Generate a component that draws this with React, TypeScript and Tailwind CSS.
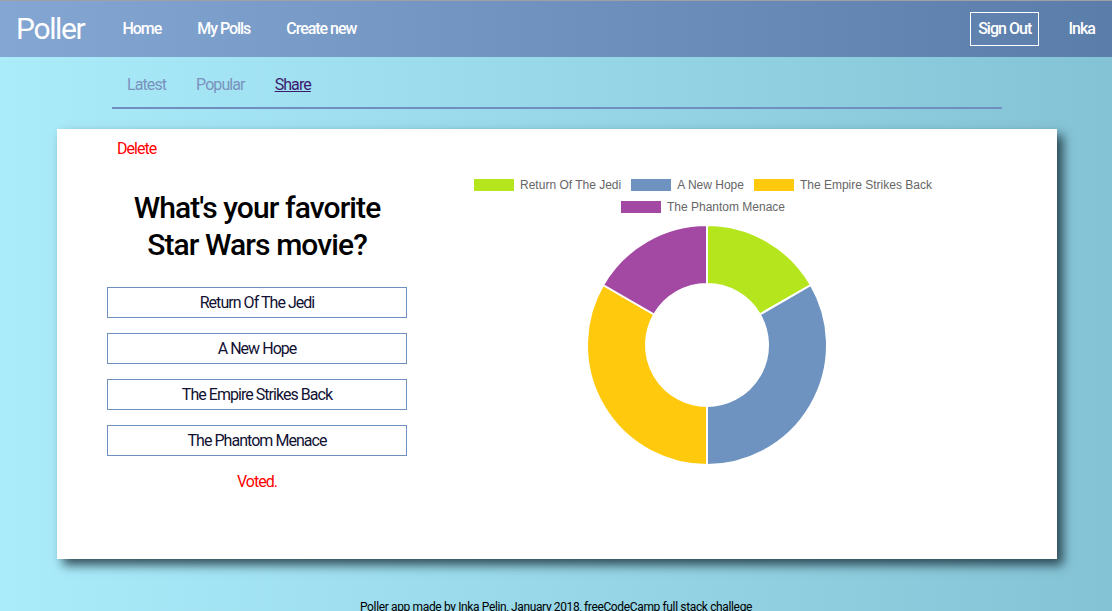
import React from "react";

const slices = [
  { label: "Return Of The Jedi", value: 1, color: "#b5e61d" },
  { label: "A New Hope", value: 2, color: "#6f93c0" },
  { label: "The Empire Strikes Back", value: 2, color: "#ffc90e" },
  { label: "The Phantom Menace", value: 1, color: "#a349a4" },
];

function arcPath(cx: number, cy: number, r: number, ri: number, a0: number, a1: number) {
  const p = (rad: number, a: number) => [cx + rad * Math.sin(a), cy - rad * Math.cos(a)];
  const [x0, y0] = p(r, a0);
  const [x1, y1] = p(r, a1);
  const [x2, y2] = p(ri, a1);
  const [x3, y3] = p(ri, a0);
  const large = a1 - a0 > Math.PI ? 1 : 0;
  return `M${x0} ${y0} A${r} ${r} 0 ${large} 1 ${x1} ${y1} L${x2} ${y2} A${ri} ${ri} 0 ${large} 0 ${x3} ${y3} Z`;
}

function Donut() {
  const total = slices.reduce((s, x) => s + x.value, 0);
  let acc = 0;
  return (
    <svg width="246" height="246" viewBox="0 0 246 246">
      {slices.map((s) => {
        const a0 = (acc / total) * Math.PI * 2;
        acc += s.value;
        const a1 = (acc / total) * Math.PI * 2;
        return (
          <path key={s.label} d={arcPath(123, 123, 120, 61, a0, a1)} fill={s.color} stroke="#fff" strokeWidth="2" />
        );
      })}
    </svg>
  );
}

export default function App() {
  return (
    <div
      className="w-[1112px] h-[611px] overflow-hidden bg-gradient-to-r from-[#abecfb] to-[#84c3d5] border-t border-[#a0a0a0]"
      style={{ fontFamily: "Roboto, 'Open Sans', sans-serif" }}
    >
      <header className="h-[56px] flex items-center bg-gradient-to-r from-[#84a6d3] to-[#5b7da9] text-white">
        <div className="pl-4 text-[30px] tracking-[-0.045em] leading-none">Poller</div>
        <nav className="flex items-center gap-[36px] ml-[38px] text-[16px] tracking-[-0.065em] font-medium">
          <span>Home</span>
          <span>My Polls</span>
          <span>Create new</span>
        </nav>
        <div className="ml-auto flex items-center">
          <span className="h-[34px] flex items-center border border-white px-[7px] text-[16px] tracking-[-0.06em] font-medium">Sign Out</span>
          <span className="ml-[29px] mr-[17px] text-[16px] tracking-[-0.06em] font-medium">Inka</span>
        </div>
      </header>

      <div className="mx-[112px] w-[890px] border-b-2 border-[#6f8fc0] flex gap-[30px] pl-[15px] pt-[16px] pb-[10px] text-[16px] tracking-[-0.057em]">
        <span className="text-[#7a93bd]">Latest</span>
        <span className="text-[#7a93bd]">Popular</span>
        <span className="text-[#3b1a6e] underline">Share</span>
      </div>

      <main className="mt-[20px] ml-[57px] w-[1000px] h-[430px] bg-white shadow-[6px_6px_10px_rgba(20,40,50,0.8)] flex">
        <section className="w-[400px] flex flex-col items-center">
          <div className="self-start ml-[60px] mt-[8px] text-[16px] text-[#ff0000] tracking-[-0.06em]">Delete</div>
          <h1 className="mt-[28px] text-[30px] font-medium leading-[37px] text-center text-black tracking-[-0.03em]">
            What's your favorite
            <br />
            Star Wars movie?
          </h1>
          <div className="mt-[24px] flex flex-col gap-[15px]">
            {slices.map((s) => (
              <div
                key={s.label}
                className="w-[300px] h-[31px] border border-[#6f8fc0] flex items-center justify-center text-[16px] text-[#111133] tracking-[-0.06em]"
              >
                {s.label}
              </div>
            ))}
          </div>
          <div className="mt-[14px] text-[16px] text-[#ff0000] tracking-[-0.06em]">Voted.</div>
        </section>
        <section className="w-[500px] flex flex-col items-center pt-[50px]">
          <div
            className="flex flex-wrap justify-center w-[480px] -ml-[8px] gap-x-[10px] gap-y-[10px] text-[12px] text-[#666]"
            style={{ fontFamily: "'Liberation Sans', Arial, sans-serif" }}
          >
            {slices.map((s) => (
              <div key={s.label} className="flex items-center gap-[6px] leading-[12px]">
                <span className="w-[40px] h-[12px] inline-block" style={{ background: s.color }} />
                <span>{s.label}</span>
              </div>
            ))}
          </div>
          <div className="mt-[9px]">
            <Donut />
          </div>
        </section>
      </main>

      <footer className="mt-[39px] text-center text-[12px] text-black tracking-[-0.03em]">
        Poller app made by Inka Pelin, January 2018, freeCodeCamp full stack challege
      </footer>
    </div>
  );
}
